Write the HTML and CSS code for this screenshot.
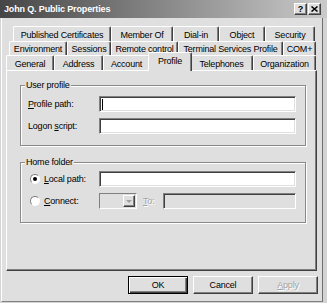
FILE: index.html
```html
<!DOCTYPE html>
<html>
<head>
<meta charset="utf-8">
<link rel="stylesheet" href="styles.css">
</head>
<body>
<div class="titlebar">
  <span class="title">John Q. Public Properties</span>
  <div class="tbtns">
    <span class="tbtn">?</span>
    <span class="tbtn"><svg width="7" height="6" viewBox="0 0 7 6"><path d="M0.5 0.5 L6.5 5.5 M6.5 0.5 L0.5 5.5" stroke="#000" stroke-width="1.5"/></svg></span>
  </div>
</div>
<div class="window">
  <div class="tabs">
    <div class="row r1">
      <div class="tab w98">Published Certificates</div>
      <div class="tab w62">Member Of</div>
      <div class="tab w46">Dial-in</div>
      <div class="tab w46">Object</div>
      <div class="tab w50">Security</div>
    </div>
    <div class="row r2">
      <div class="tab w58">Environment</div>
      <div class="tab w44">Sessions</div>
      <div class="tab w67">Remote control</div>
      <div class="tab w105">Terminal Services Profile</div>
      <div class="tab w33">COM+</div>
    </div>
    <div class="row r3">
      <div class="tab w48">General</div>
      <div class="tab w49">Address</div>
      <div class="tab w47">Account</div>
      <div class="tab sel w44">Profile</div>
      <div class="tab w63">Telephones</div>
      <div class="tab w63">Organization</div>
    </div>
  </div>
  <div class="panel">
    <fieldset class="group g1">
      <legend>User profile</legend>
      <div class="field">
        <span class="lbl"><u>P</u>rofile path:</span>
        <span class="input"><span class="caret"></span></span>
      </div>
      <div class="field">
        <span class="lbl">Logon <u>s</u>cript:</span>
        <span class="input"></span>
      </div>
    </fieldset>
    <fieldset class="group g2">
      <legend>Home folder</legend>
      <div class="field">
        <span class="rlbl"><span class="radio on"></span><span><u>L</u>ocal path:</span></span>
        <span class="input"></span>
      </div>
      <div class="field">
        <span class="rlbl"><span class="radio"></span><span><u>C</u>onnect:</span></span>
        <span class="combo"><span class="drop"><span class="arrow"></span></span></span>
        <span class="tolbl disabled"><u>T</u>o:</span>
        <span class="input toinput"></span>
      </div>
    </fieldset>
  </div>
  <div class="btns">
    <div class="btn default">OK</div>
    <div class="btn">Cancel</div>
    <div class="btn"><span class="disabled"><u>A</u>pply</span></div>
  </div>
</div>
</body>
</html>
```
FILE: styles.css
```css
* { box-sizing: border-box; }
html, body { margin: 0; padding: 0; }
body {
  width: 327px;
  height: 303px;
  overflow: hidden;
  background: #d4d4d4;
  font-family: "Liberation Sans", Arial, sans-serif;
  font-size: 9px;
  letter-spacing: -0.2px;
  color: #000;
}
.titlebar {
  height: 18px;
  display: flex;
  align-items: center;
  padding-left: 4px;
  background: linear-gradient(to right, #464646, #cacaca);
}
.title {
  flex: 1;
  color: #fff;
  font-weight: bold;
  letter-spacing: -0.15px;
}
.tbtns { display: flex; gap: 1px; margin-right: 6px; }
.tbtn {
  width: 13px;
  height: 12px;
  display: flex;
  align-items: center;
  justify-content: center;
  background: #dfdfdf;
  border: 1px solid;
  border-color: #fff #404040 #404040 #fff;
  box-shadow: inset -1px -1px 0 #808080;
  font-weight: bold;
  font-size: 9px;
  letter-spacing: 0;
}
.window {
  width: 322px;
  height: 284px;
  margin-left: 1px;
  background: #dfdfdf;
  border-left: 1px solid #fff;
  border-right: 1px solid #707070;
  border-bottom: 1px solid #808080;
  padding: 8px 3px 0 4px;
}
.tabs { display: flex; flex-direction: column; }
.row { display: flex; align-items: flex-start; }
.r1 { height: 15px; margin-left: 7px; }
.r2 { height: 14px; margin-left: 3px; }
.r3 { height: 15px; }
.tab {
  height: 100%;
  display: flex;
  align-items: center;
  justify-content: center;
  white-space: nowrap;
  background: #dfdfdf;
  border-top: 1px solid #fff;
  border-left: 1px solid #fff;
  border-right: 1px solid #404040;
  box-shadow: inset -1px 0 0 #808080;
  border-radius: 2px 2px 0 0;
  padding-top: 1px;
}
.sel {
  position: relative;
  z-index: 1;
  height: 19px;
  margin: -3px -2px 0 -2px;
  padding-bottom: 3px;
}
.w33 { width: 33px; }
.w44 { width: 44px; }
.w46 { width: 46px; }
.w47 { width: 47px; }
.w48 { width: 48px; }
.w49 { width: 49px; }
.w50 { width: 50px; }
.w58 { width: 58px; }
.w62 { width: 62px; }
.w63 { width: 63px; }
.w67 { width: 67px; }
.w98 { width: 98px; }
.w105 { width: 105px; }
.panel {
  width: 311px;
  height: 201px;
  border: 1px solid;
  border-color: #fff #404040 #404040 #fff;
  box-shadow: inset -1px -1px 0 #808080;
  padding: 9px 10px 0 13px;
}
.group {
  width: 286px;
  margin: 0;
  border: 1px solid #8a8a8a;
  box-shadow: inset 1px 1px 0 #fff, 1px 1px 0 #fff;
  padding: 5px 9px 11px 7px;
  min-width: 0;
}
.g2 { margin-top: 11px; padding: 3px 9px 13px 7px; }
.group legend {
  padding: 0 1px;
  margin-left: -3px;
  line-height: 11px;
  background: #dfdfdf;
}
.field { display: flex; align-items: center; height: 16px; }
.field + .field { margin-top: 6px; }
.lbl { width: 71px; }
.rlbl { width: 71px; display: flex; align-items: center; }
.input {
  width: 197px;
  height: 16px;
  display: flex;
  align-items: center;
  background: #fff;
  border: 1px solid;
  border-color: #808080 #fff #fff #808080;
  box-shadow: inset 1px 1px 0 #404040, inset -1px -1px 0 #dfdfdf;
}
.caret { width: 1px; height: 11px; background: #000; margin-left: 2px; }
.radio {
  width: 10px;
  height: 10px;
  border-radius: 50%;
  border: 1px solid;
  border-color: #808080 #fff #fff #808080;
  background: #fff;
  margin: 0 4px 0 2px;
  display: flex;
  align-items: center;
  justify-content: center;
}
.radio.on::after {
  content: "";
  width: 4px;
  height: 4px;
  border-radius: 50%;
  background: #000;
}
.combo {
  width: 38px;
  height: 16px;
  display: flex;
  justify-content: flex-end;
  padding: 1px;
  background: #dfdfdf;
  border: 1px solid;
  border-color: #808080 #fff #fff #808080;
}
.drop {
  width: 12px;
  display: flex;
  align-items: center;
  justify-content: center;
  border: 1px solid;
  border-color: #fff #404040 #404040 #fff;
  box-shadow: inset -1px -1px 0 #808080;
}
.arrow {
  width: 0;
  height: 0;
  border-left: 3px solid transparent;
  border-right: 3px solid transparent;
  border-top: 3px solid #a0a0a0;
}
.tolbl { width: 20px; margin-left: 6px; }
.toinput { width: 133px; background: #dfdfdf; }
.disabled { color: #a4a4a4; text-shadow: 1px 1px 0 #fff; }
.btns {
  display: flex;
  justify-content: flex-end;
  gap: 5px;
  margin-top: 5px;
  padding-right: 1px;
}
.btn {
  width: 60px;
  height: 18px;
  display: flex;
  align-items: center;
  justify-content: center;
  background: #dfdfdf;
  border: 1px solid;
  border-color: #fff #404040 #404040 #fff;
  box-shadow: inset -1px -1px 0 #808080;
}
.btn.default {
  border-color: #000;
  box-shadow: inset 1px 1px 0 #fff, inset -1px -1px 0 #404040, inset -2px -2px 0 #808080;
}
```
